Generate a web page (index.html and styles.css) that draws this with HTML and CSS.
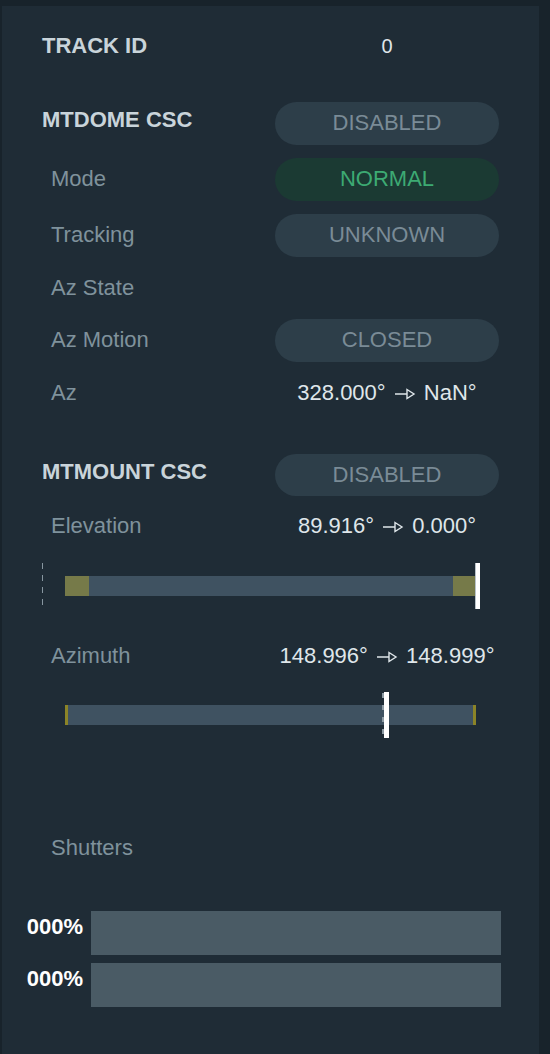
FILE: index.html
```html
<!DOCTYPE html>
<html>
<head>
<meta charset="utf-8">
<link rel="stylesheet" href="styles.css">
</head>
<body>
<div class="panel">
  <div class="row text-row first">
    <div class="head">TRACK ID</div>
    <div class="value small">0</div>
  </div>

  <div class="row pill-row section">
    <div class="head">MTDOME CSC</div>
    <div class="pill">DISABLED</div>
  </div>
  <div class="row pill-row">
    <div class="label">Mode</div>
    <div class="pill ok">NORMAL</div>
  </div>
  <div class="row pill-row">
    <div class="label">Tracking</div>
    <div class="pill">UNKNOWN</div>
  </div>
  <div class="row text-row">
    <div class="label">Az State</div>
    <div class="value"></div>
  </div>
  <div class="row pill-row">
    <div class="label">Az Motion</div>
    <div class="pill">CLOSED</div>
  </div>
  <div class="row text-row">
    <div class="label">Az</div>
    <div class="value">328.000° <svg class="arrow" viewBox="0 0 22 14" width="22" height="14"><path d="M1 7 H13 M13 2.5 L20 7 L13 11.5 Z" /></svg> NaN°</div>
  </div>

  <div class="row pill-row section2">
    <div class="head">MTMOUNT CSC</div>
    <div class="pill">DISABLED</div>
  </div>
  <div class="row text-row tight">
    <div class="label">Elevation</div>
    <div class="value">89.916° <svg class="arrow" viewBox="0 0 22 14" width="22" height="14"><path d="M1 7 H13 M13 2.5 L20 7 L13 11.5 Z" /></svg> 0.000°</div>
  </div>
  <div class="gauge el-gauge">
    <div class="track">
      <div class="olive seg-start"></div>
      <div class="fill"></div>
      <div class="olive seg-end"></div>
    </div>
    <div class="dash-line el-target"></div>
    <div class="marker el-current"></div>
  </div>

  <div class="row text-row az-row">
    <div class="label">Azimuth</div>
    <div class="value">148.996° <svg class="arrow" viewBox="0 0 22 14" width="22" height="14"><path d="M1 7 H13 M13 2.5 L20 7 L13 11.5 Z" /></svg> 148.999°</div>
  </div>
  <div class="gauge az-gauge">
    <div class="track">
      <div class="olive tick"></div>
      <div class="fill"></div>
      <div class="olive tick"></div>
    </div>
    <div class="dash-line az-target"></div>
    <div class="marker az-current"></div>
  </div>

  <div class="row text-row shutters-row">
    <div class="label">Shutters</div>
  </div>
  <div class="shutter first-shutter">
    <div class="pct">000%</div>
    <div class="sbar"></div>
  </div>
  <div class="shutter">
    <div class="pct">000%</div>
    <div class="sbar"></div>
  </div>
</div>
</body>
</html>
```

FILE: styles.css
```css
* { box-sizing: border-box; }
html, body {
  margin: 0;
  padding: 0;
  background: #18232b;
  font-family: "Liberation Sans", Arial, sans-serif;
  font-size: 22px;
}
.panel {
  margin: 6px 11px 0 2px;
  min-height: 1048px;
  background: #1f2c36;
  padding-top: 22px;
  overflow: hidden;
}
.row {
  display: grid;
  grid-template-columns: 233px 224px;
  margin-left: 40px;
  align-items: center;
  margin-top: 13px;
}
.row.first { margin-top: 0; }
.text-row { height: 36px; }
.pill-row { height: 43px; }
.section { margin-top: 38px; }
.section2 { margin-top: 43px; height: 42px; }
.tight { margin-top: 12px; }
.az-row { margin-top: 29px; }
.shutters-row { margin-top: 92px; }

.head {
  font-weight: 700;
  color: #c9d4da;
  line-height: 36px;
  align-self: start;
}
.label {
  color: #7f929c;
  line-height: 36px;
  padding-left: 9px;
  padding-bottom: 2px;
}
.value {
  color: #dfe6ea;
  text-align: center;
  line-height: 36px;
  padding-bottom: 2px;
  white-space: nowrap;
}
.value.small { font-size: 20px; padding-bottom: 4px; }
.arrow {
  vertical-align: -1px;
  margin: 0 2px;
}
.arrow path {
  fill: none;
  stroke: #dfe6ea;
  stroke-width: 1.4;
  stroke-linejoin: miter;
}
.pill {
  height: 100%;
  border-radius: 22px;
  background: #2d3e49;
  color: #7a8b96;
  display: flex;
  align-items: center;
  justify-content: center;
  padding-bottom: 1px;
}
.pill.ok {
  background: #1b3a33;
  color: #3daa73;
}

.gauge {
  position: relative;
  margin-left: 63px;
  width: 411px;
  height: 46px;
  padding-top: 13px;
}
.el-gauge { margin-top: 19px; }
.az-gauge { margin-top: 18px; }
.track {
  height: 20px;
  display: flex;
  background: #3f5261;
}
.fill { flex: 1; }
.olive { background: #767a49; }
.seg-start { width: 24px; }
.seg-end { width: 23px; }
.tick { width: 3px; background: #8b8427; }

.dash-line {
  position: absolute;
  width: 1px;
  background: repeating-linear-gradient(to bottom, #8796a0 0 6px, transparent 6px 12px);
}
.el-target { left: -23px; top: 0; height: 42px; }
.az-target {
  left: 317px;
  top: 1px;
  width: 2px;
  height: 44px;
  background: repeating-linear-gradient(to bottom, #8c9aa3 0 5px, transparent 5px 12px);
}
.marker {
  position: absolute;
  top: 0;
  height: 46px;
  background: #ffffff;
}
.el-current { left: 410px; width: 5px; border-left: 1px solid #b8c2c8; }
.az-current { left: 319px; width: 5px; }

.shutter {
  display: grid;
  grid-template-columns: 58px 410px;
  column-gap: 8px;
  margin-left: 23px;
  margin-top: 8px;
  height: 44px;
}
.first-shutter { margin-top: 45px; }
.pct {
  color: #ffffff;
  font-weight: 700;
  text-align: right;
  line-height: 32px;
}
.sbar { background: #4a5b65; }
```
